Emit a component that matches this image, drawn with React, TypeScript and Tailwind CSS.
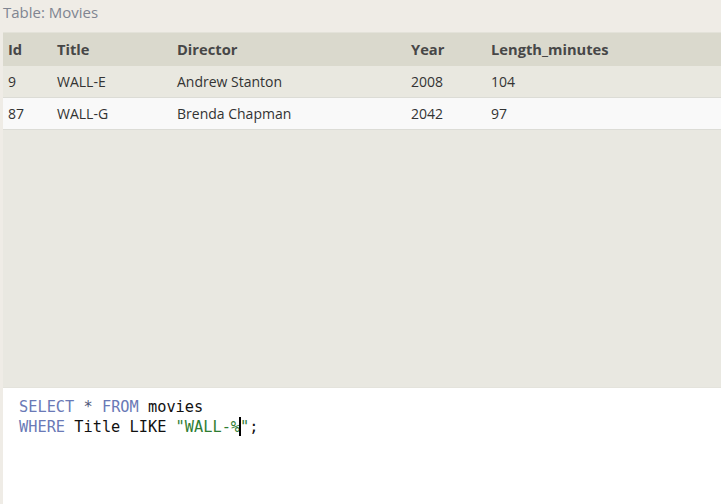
import React from "react";

const cols = [
  { key: "Id", w: "w-[49px]" },
  { key: "Title", w: "w-[120px]" },
  { key: "Director", w: "w-[234px]" },
  { key: "Year", w: "w-[80px]" },
  { key: "Length_minutes", w: "flex-1" },
];

const rows = [
  ["9", "WALL-E", "Andrew Stanton", "2008", "104"],
  ["87", "WALL-G", "Brenda Chapman", "2042", "97"],
];

export default function App() {
  return (
    <div
      className="w-[721px] h-[504px] bg-[#efece6] flex flex-col overflow-hidden"
      style={{ fontFamily: '"Open Sans", "Noto Sans", sans-serif' }}
    >
      <div className="h-[32px] pl-[3px] pt-[1px] text-[15px] leading-[22px] text-[#808591]">
        Table: Movies
      </div>
      <div className="ml-[3px] h-[355px] bg-[#e9e8e1] flex flex-col">
        <div className="h-[34px] bg-[#dad9cd] flex items-center text-[14.7px] font-bold text-[#474747] border-t border-[#e3e2d9]">
          {cols.map((c) => (
            <div key={c.key} className={`${c.w} pl-[5px]`}>
              {c.key}
            </div>
          ))}
        </div>
        {rows.map((r, i) => (
          <div
            key={i}
            className={`h-[32px] flex items-center text-[14px] text-[#333333] border-b border-[#dcdcd6] ${
              i === 0 ? "bg-[#e9e8e0]" : "bg-[#f9f9f9]"
            }`}
          >
            {r.map((v, j) => (
              <div key={j} className={`${cols[j].w} pl-[5px]`}>
                {v}
              </div>
            ))}
          </div>
        ))}
      </div>
      <div className="ml-[3px] flex-1 bg-white border-t border-[#e4e3dc] pl-[16px] pt-[9px]">
        <div
          className="text-[15.3px] leading-[20px] text-[#111111] whitespace-pre"
          style={{ fontFamily: '"DejaVu Sans Mono", "Liberation Mono", monospace' }}
        >
          <div>
            <span className="text-[#6a79b6]">SELECT</span> <span className="text-[#4d5578]">*</span>{" "}
            <span className="text-[#6a79b6]">FROM</span> movies
          </div>
          <div>
            <span className="text-[#6a79b6]">WHERE</span> Title LIKE{" "}
            <span className="text-[#2f7d32]">"WALL-%</span>
            <span className="relative">
              <span className="absolute left-[-1px] top-[-1px] w-[2px] h-[19px] bg-black" />
              <span className="text-[#2f7d32]">"</span>
            </span>
            ;
          </div>
        </div>
      </div>
    </div>
  );
}
